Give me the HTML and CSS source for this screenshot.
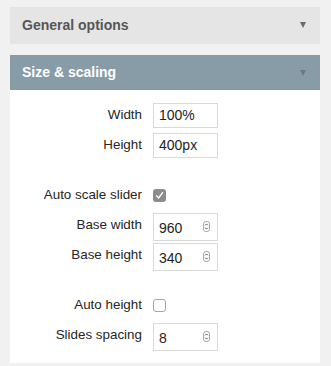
FILE: index.html
```html
<!DOCTYPE html>
<html>
<head>
<meta charset="utf-8">
<link rel="stylesheet" href="styles.css">
</head>
<body>
<div class="wrap">
  <div class="panel-head head-general">
    <span class="head-title">General options</span>
    <span class="arrow"></span>
  </div>
  <div class="panel">
    <div class="panel-head head-size">
      <span class="head-title">Size &amp; scaling</span>
      <span class="arrow arrow-dark"></span>
    </div>
    <div class="panel-body">
      <div class="row r1"><label class="lbl">Width</label><div class="input">100%</div></div>
      <div class="row r2"><label class="lbl">Height</label><div class="input">400px</div></div>
      <div class="row r3"><label class="lbl">Auto scale slider</label>
        <span class="check checked"><svg width="13" height="13" viewBox="0 0 13 13"><path d="M3.6 6.8 L5.6 9 L9.6 3.6" fill="none" stroke="#fff" stroke-width="1.3" stroke-linecap="round" stroke-linejoin="round"/></svg></span>
      </div>
      <div class="row r4"><label class="lbl">Base width</label><div class="input num"><span>960</span><span class="spin"><svg width="7" height="11" viewBox="0 0 7 11"><rect x="0.5" y="0.5" width="6" height="10" rx="2.5" fill="none" stroke="#a8a8a8"/><path d="M2.1 4.3 L3.5 2.9 L4.9 4.3 M2.1 6.7 L3.5 8.1 L4.9 6.7" fill="none" stroke="#444" stroke-width="0.9"/></svg></span></div></div>
      <div class="row r5"><label class="lbl">Base height</label><div class="input num"><span>340</span><span class="spin"><svg width="7" height="11" viewBox="0 0 7 11"><rect x="0.5" y="0.5" width="6" height="10" rx="2.5" fill="none" stroke="#a8a8a8"/><path d="M2.1 4.3 L3.5 2.9 L4.9 4.3 M2.1 6.7 L3.5 8.1 L4.9 6.7" fill="none" stroke="#444" stroke-width="0.9"/></svg></span></div></div>
      <div class="row r6"><label class="lbl">Auto height</label><span class="check"></span></div>
      <div class="row r7"><label class="lbl">Slides spacing</label><div class="input num"><span>8</span><span class="spin"><svg width="7" height="11" viewBox="0 0 7 11"><rect x="0.5" y="0.5" width="6" height="10" rx="2.5" fill="none" stroke="#a8a8a8"/><path d="M2.1 4.3 L3.5 2.9 L4.9 4.3 M2.1 6.7 L3.5 8.1 L4.9 6.7" fill="none" stroke="#444" stroke-width="0.9"/></svg></span></div></div>
    </div>
  </div>
</div>
</body>
</html>
```

FILE: styles.css
```css
html, body {
  margin: 0;
  padding: 0;
  background: #f1f1f1;
}
body {
  font-family: "Liberation Sans", Arial, sans-serif;
  color: #333;
}
.wrap {
  padding: 7px 11px 0 10px;
}
.panel-head {
  display: flex;
  align-items: center;
  justify-content: space-between;
  padding: 0 13px 0 12px;
}
.head-general {
  height: 36px;
  background: #e5e5e5;
  box-shadow: 0 1px 1px rgba(0,0,0,0.04);
  margin-bottom: 12px;
}
.head-size {
  height: 35px;
  background: #879ca7;
  padding-bottom: 2px;
  box-sizing: border-box;
}
.head-title {
  font-size: 14px;
  font-weight: bold;
  color: #565656;
}
.head-size .head-title {
  color: #fff;
}
.arrow {
  width: 0;
  height: 0;
  border-left: 3.5px solid transparent;
  border-right: 3.5px solid transparent;
  border-top: 6px solid #6a6a6a;
  margin-top: -1px;
  margin-right: 1px;
}
.arrow-dark {
  border-top-color: #6b7a82;
  margin-top: 2px;
}
.panel-body {
  background: #fff;
  padding: 13px 0 12px 0;
}
.row {
  display: flex;
  align-items: flex-start;
}
.lbl {
  width: 132px;
  text-align: right;
  font-size: 13.4px;
  line-height: 24px;
  color: #262626;
  margin-right: 11px;
}
.input {
  box-sizing: border-box;
  width: 65px;
  height: 25px;
  border: 1px solid #d9d9d9;
  font-size: 14px;
  line-height: 23px;
  padding: 0 5px;
  color: #1e1e1e;
  display: flex;
  align-items: center;
}
.input.num {
  height: 28px;
  justify-content: space-between;
  padding: 2px 7px 0 5px;
}
.spin {
  display: flex;
  margin-top: -3px;
}
.check {
  box-sizing: border-box;
  width: 13px;
  height: 13px;
  border: 1px solid #a5a5a5;
  border-radius: 3px;
  background: #fff;
  margin-top: 5.5px;
}
.check.checked {
  background: #8c8c8c;
  border: none;
  display: flex;
}
.r2 { margin-top: 5px; }
.r3 { margin-top: 25px; }
.r4 { margin-top: 6px; }
.r5 { margin-top: 2px; }
.r6 { margin-top: 22px; }
.r7 { margin-top: 6px; }
```
